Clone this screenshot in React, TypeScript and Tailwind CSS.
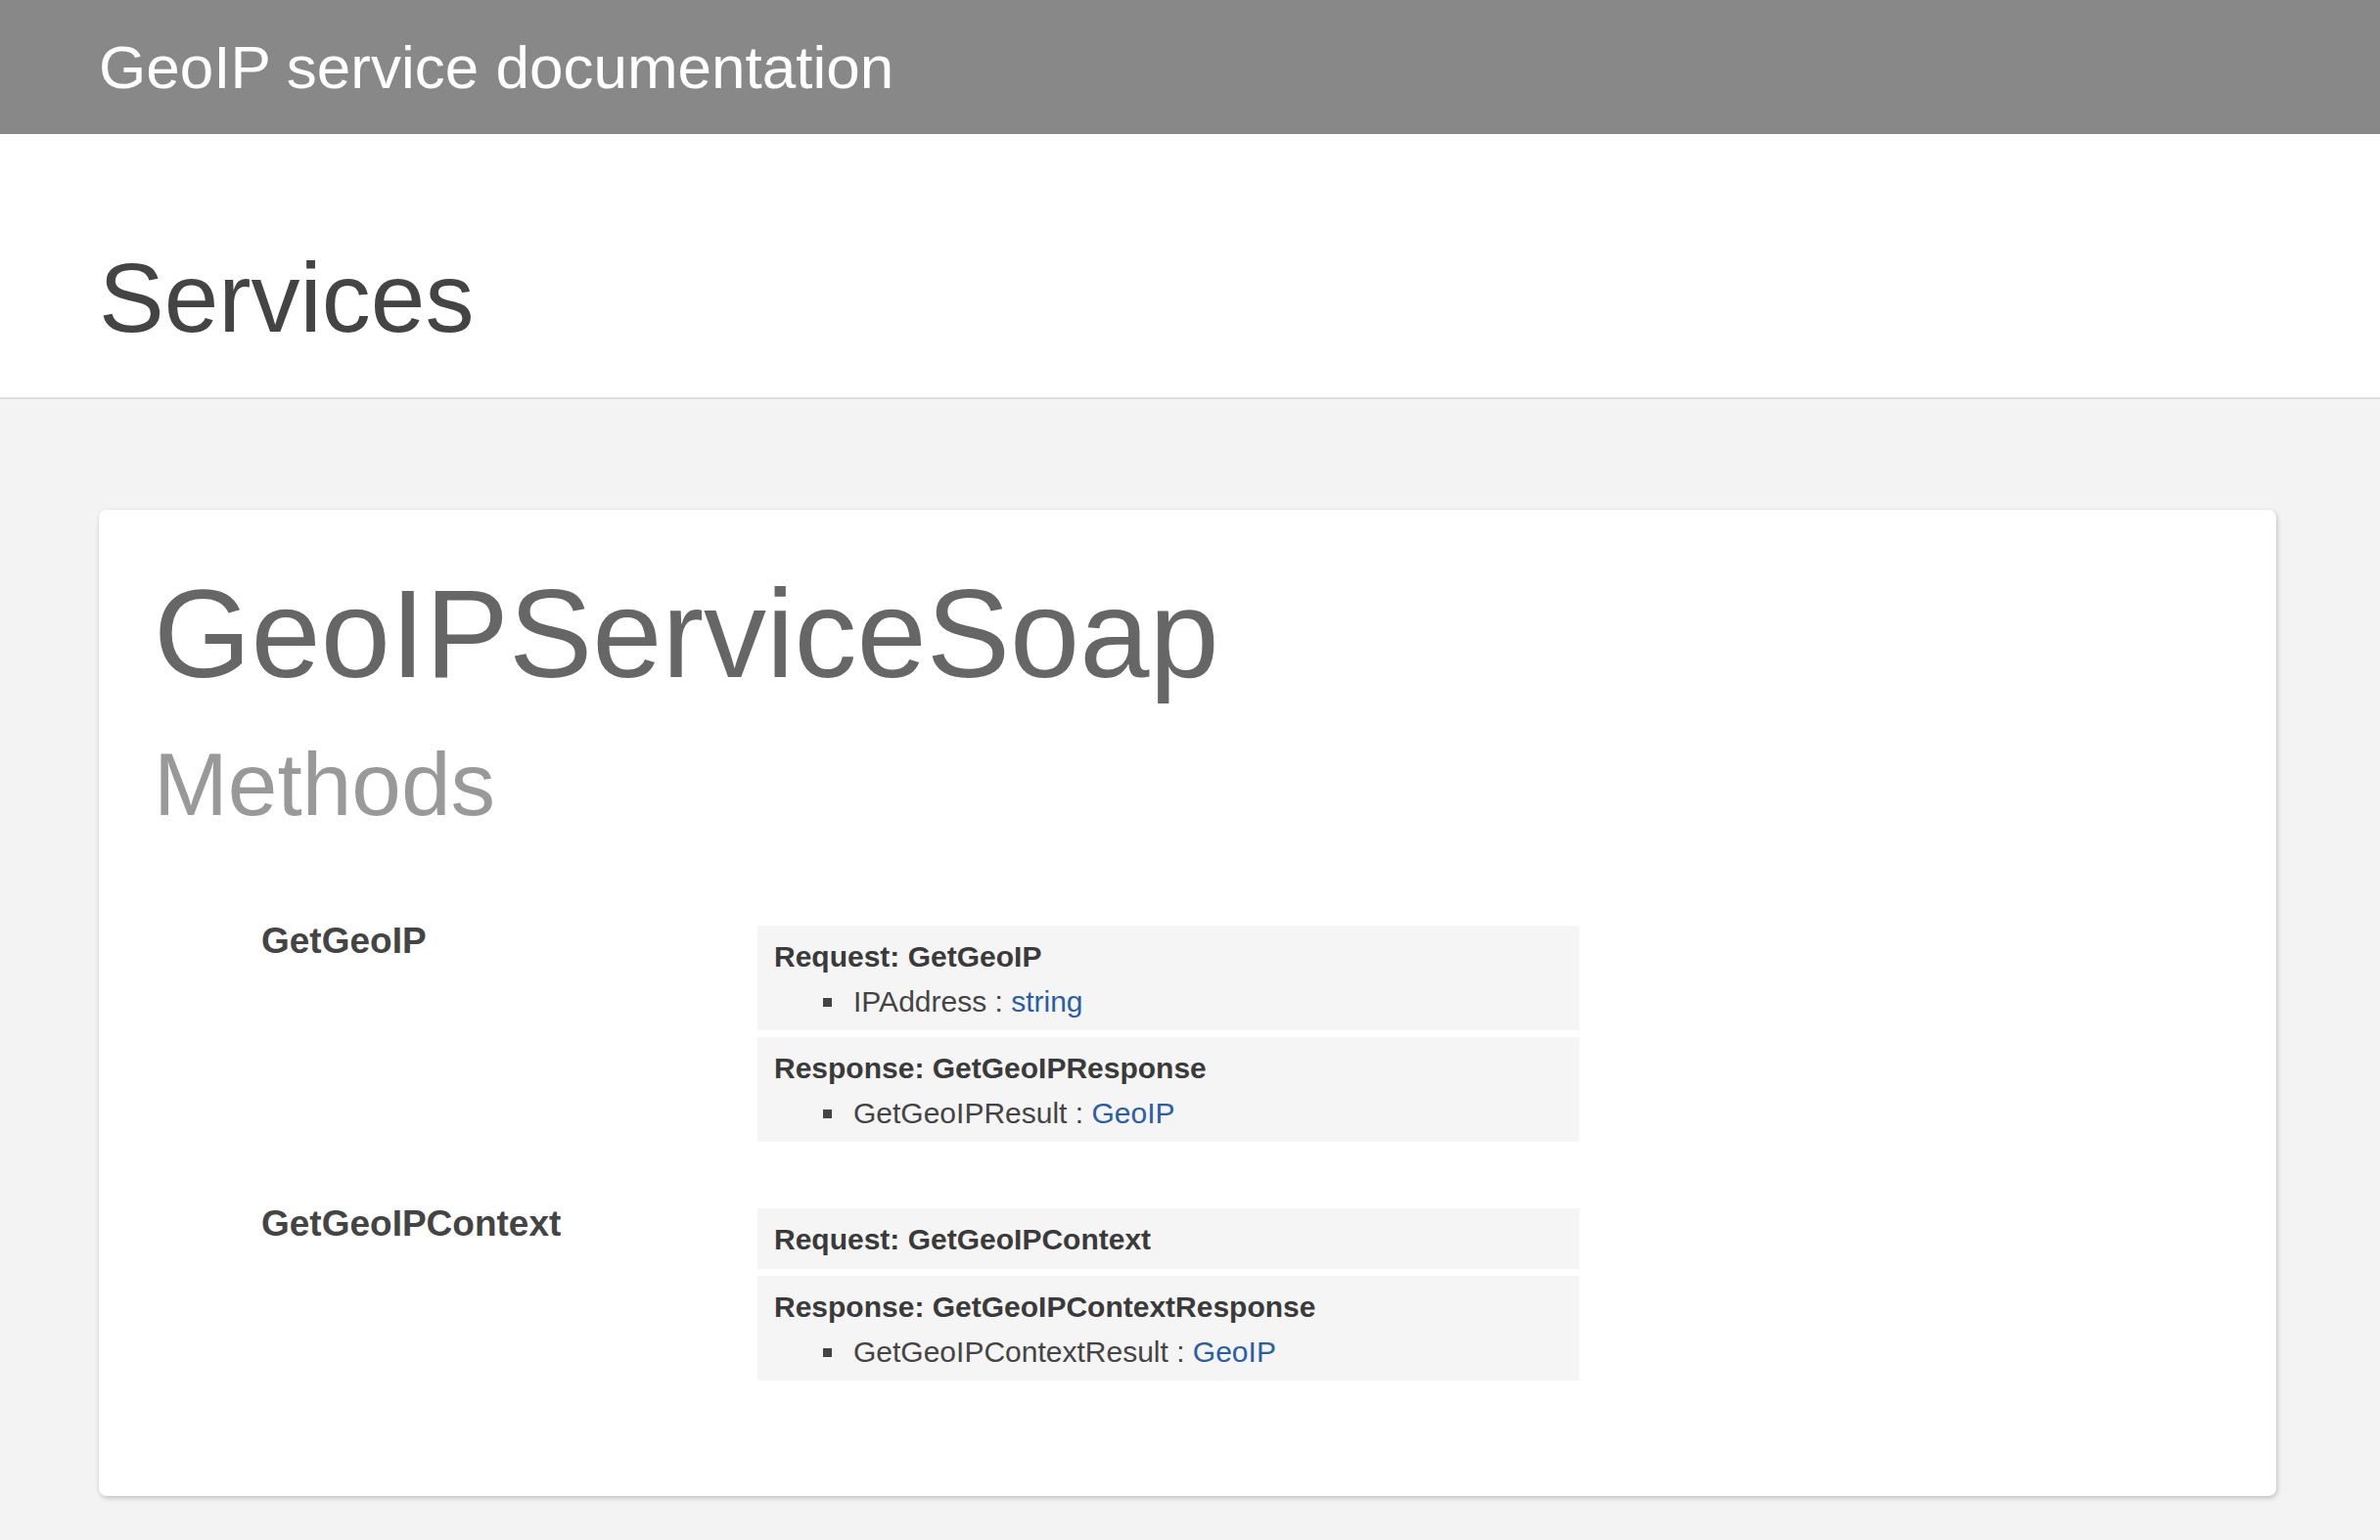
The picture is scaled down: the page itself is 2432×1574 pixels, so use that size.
import React from 'react';

interface Field {
  name: string;
  type: string;
}

interface Message {
  kind: 'Request' | 'Response';
  name: string;
  fields: Field[];
}

interface Method {
  name: string;
  messages: Message[];
}

const METHODS: Method[] = [
  {
    name: 'GetGeoIP',
    messages: [
      { kind: 'Request', name: 'GetGeoIP', fields: [{ name: 'IPAddress', type: 'string' }] },
      { kind: 'Response', name: 'GetGeoIPResponse', fields: [{ name: 'GetGeoIPResult', type: 'GeoIP' }] },
    ],
  },
  {
    name: 'GetGeoIPContext',
    messages: [
      { kind: 'Request', name: 'GetGeoIPContext', fields: [] },
      { kind: 'Response', name: 'GetGeoIPContextResponse', fields: [{ name: 'GetGeoIPContextResult', type: 'GeoIP' }] },
    ],
  },
];

function MessageBox({ msg }: { msg: Message }) {
  return (
    <div className="bg-[#f5f5f5] pt-[12px] pb-[10px] pl-[17px] pr-4">
      <h5 className="text-[30px] leading-[40px] font-bold text-[#3a3a3a]">
        {msg.kind}: {msg.name}
      </h5>
      {msg.fields.length > 0 && (
        <ul className="mt-[7px]">
          {msg.fields.map((f) => (
            <li key={f.name} className="flex items-center text-[30px] leading-[38px] text-[#444]">
              <span className="ml-[50px] mr-[22px] w-[9px] h-[9px] bg-[#444] shrink-0" />
              <span>
                {f.name} : <a href="#" className="text-[#2a5da8]">{f.type}</a>
              </span>
            </li>
          ))}
        </ul>
      )}
    </div>
  );
}

export default function App() {
  return (
    <div className="min-h-screen bg-[#f3f3f3] font-['Liberation_Sans',Arial,sans-serif]">
      {/* Top bar */}
      <header className="bg-[#888888] h-[137px] flex items-center px-[101px]">
        <h1 className="text-white text-[62px] leading-[68px]">GeoIP service documentation</h1>
      </header>

      {/* Page title */}
      <div className="bg-white border-b-2 border-[#dddddd] pt-[112px] pb-[47px] px-[101px]">
        <h2 className="text-[#444] text-[100px] leading-[110px]">Services</h2>
      </div>

      {/* Service card */}
      <div className="pl-[101px] pr-[106px] pt-[113px] pb-[40px]">
        <div className="bg-white rounded-[8px] shadow-[1px_2px_5px_rgba(0,0,0,0.22)] pt-[56px] px-[56px] pb-[118px]">
          <h2 className="text-[#666] text-[128px] leading-[141px]">GeoIPServiceSoap</h2>
          <h3 className="mt-[34px] text-[#999] text-[91px] leading-[100px]">Methods</h3>

          <div className="mt-[94px] flex flex-col gap-[68px]">
            {METHODS.map((m) => (
              <div key={m.name} className="flex items-start pl-[110px]">
                <div className="w-[507px] shrink-0 -mt-[3px] text-[37px] leading-none font-bold text-[#444]">
                  {m.name}
                </div>
                <div className="w-[840px] flex flex-col gap-[7px]">
                  {m.messages.map((msg) => (
                    <MessageBox key={msg.kind} msg={msg} />
                  ))}
                </div>
              </div>
            ))}
          </div>
        </div>
      </div>
    </div>
  );
}
